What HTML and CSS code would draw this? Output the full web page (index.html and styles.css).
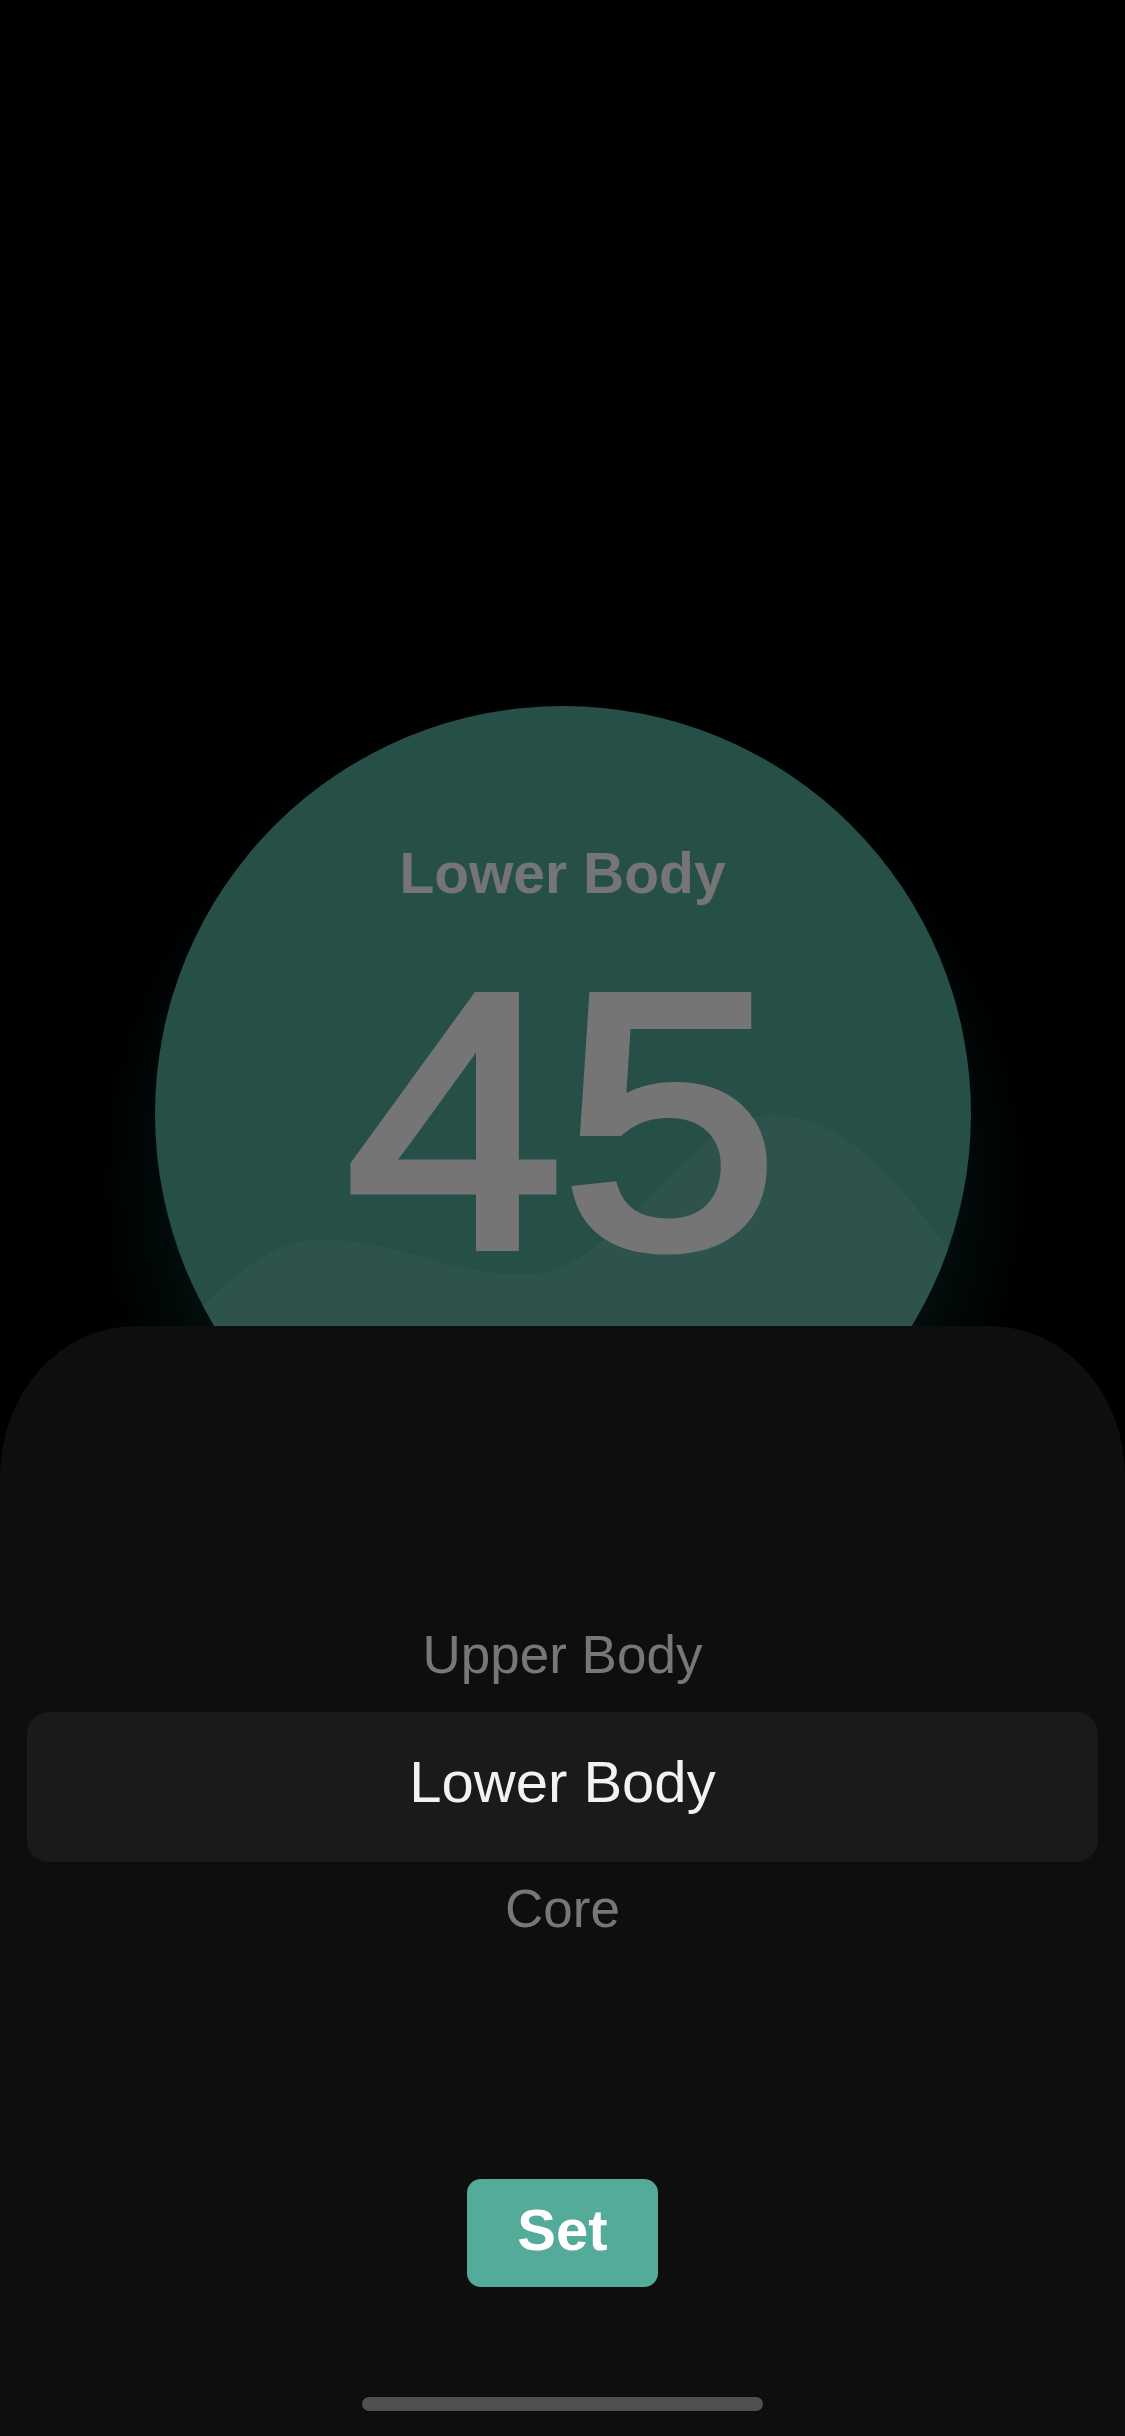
FILE: index.html
```html
<!DOCTYPE html>
<html lang="en">
<head>
  <meta charset="UTF-8" />
  <meta name="viewport" content="width=device-width, initial-scale=1.0"/>
  <title>Workout Focus</title>
  <link rel="stylesheet" href="styles.css">
</head>
<body>
  <div class="stage">
    <div class="dial">
      <svg class="wave" viewBox="0 0 816 816" preserveAspectRatio="none">
        <path d="M0,660 C50,590 110,533 164,533 C240,533 300,572 375,568 C470,562 530,409 619,409 C690,409 750,480 816,575 L816,816 L0,816 Z" fill="#2e534c"/>
      </svg>
      <div class="dial-title">Lower Body</div>
      <div class="dial-value">45</div>
    </div>
  </div>

  <div class="sheet">
    <div class="picker">
      <div class="picker-item">Upper Body</div>
      <div class="picker-item selected">Lower Body</div>
      <div class="picker-item">Core</div>
    </div>
    <button class="set-btn">Set</button>
    <div class="home-bar"></div>
  </div>
</body>
</html>
```

FILE: styles.css
```css
body {
  margin: 0;
  background-color: #000;
  font-family: "Liberation Sans", Arial, sans-serif;
  width: 1125px;
  height: 2436px;
  overflow: hidden;
}

.stage {
  height: 1326px;
  overflow: hidden;
  display: flex;
  justify-content: center;
}

.dial {
  position: relative;
  width: 816px;
  height: 816px;
  margin-top: 706px;
  border-radius: 50%;
  background-color: #264f48;
  box-shadow: 0 70px 90px rgba(8, 40, 36, 0.5);
  overflow: hidden;
  display: flex;
  flex-direction: column;
  align-items: center;
  padding-top: 139px;
  box-sizing: border-box;
}

.wave {
  position: absolute;
  left: 0;
  top: 0;
  width: 816px;
  height: 816px;
}

.dial-title {
  position: relative;
  font-size: 57px;
  font-weight: bold;
  line-height: 1;
  color: #757575;
}

.dial-value {
  position: relative;
  margin-top: 38px;
  font-size: 362px;
  line-height: 1;
  color: #757575;
  -webkit-text-stroke: 10px #757575;
  transform: scaleX(1.07);
}

.sheet {
  height: 1110px;
  background-color: #0e0e0e;
  border-radius: 135px 135px 0 0 / 150px 150px 0 0;
  padding: 302px 27px 0;
  box-sizing: border-box;
  display: flex;
  flex-direction: column;
  align-items: center;
}

.picker {
  width: 100%;
  display: flex;
  flex-direction: column;
  align-items: center;
}

.picker-item {
  font-size: 53px;
  line-height: 1;
  color: #777;
}

.picker-item.selected {
  width: 100%;
  margin: 31px 0 20px;
  padding: 41px 0 51px;
  background-color: #1a1a1a;
  border-radius: 22px;
  text-align: center;
  font-size: 58px;
  color: #f2f2f2;
}

.set-btn {
  margin-top: 244px;
  width: 191px;
  padding: 22px 0 28px;
  border: none;
  border-radius: 14px;
  background-color: #55ab9a;
  color: #fff;
  font-family: "Liberation Sans", Arial, sans-serif;
  font-size: 58px;
  font-weight: bold;
  line-height: 1;
  cursor: pointer;
}

.home-bar {
  margin-top: 110px;
  width: 401px;
  height: 14px;
  border-radius: 7px;
  background-color: #505050;
}
```
